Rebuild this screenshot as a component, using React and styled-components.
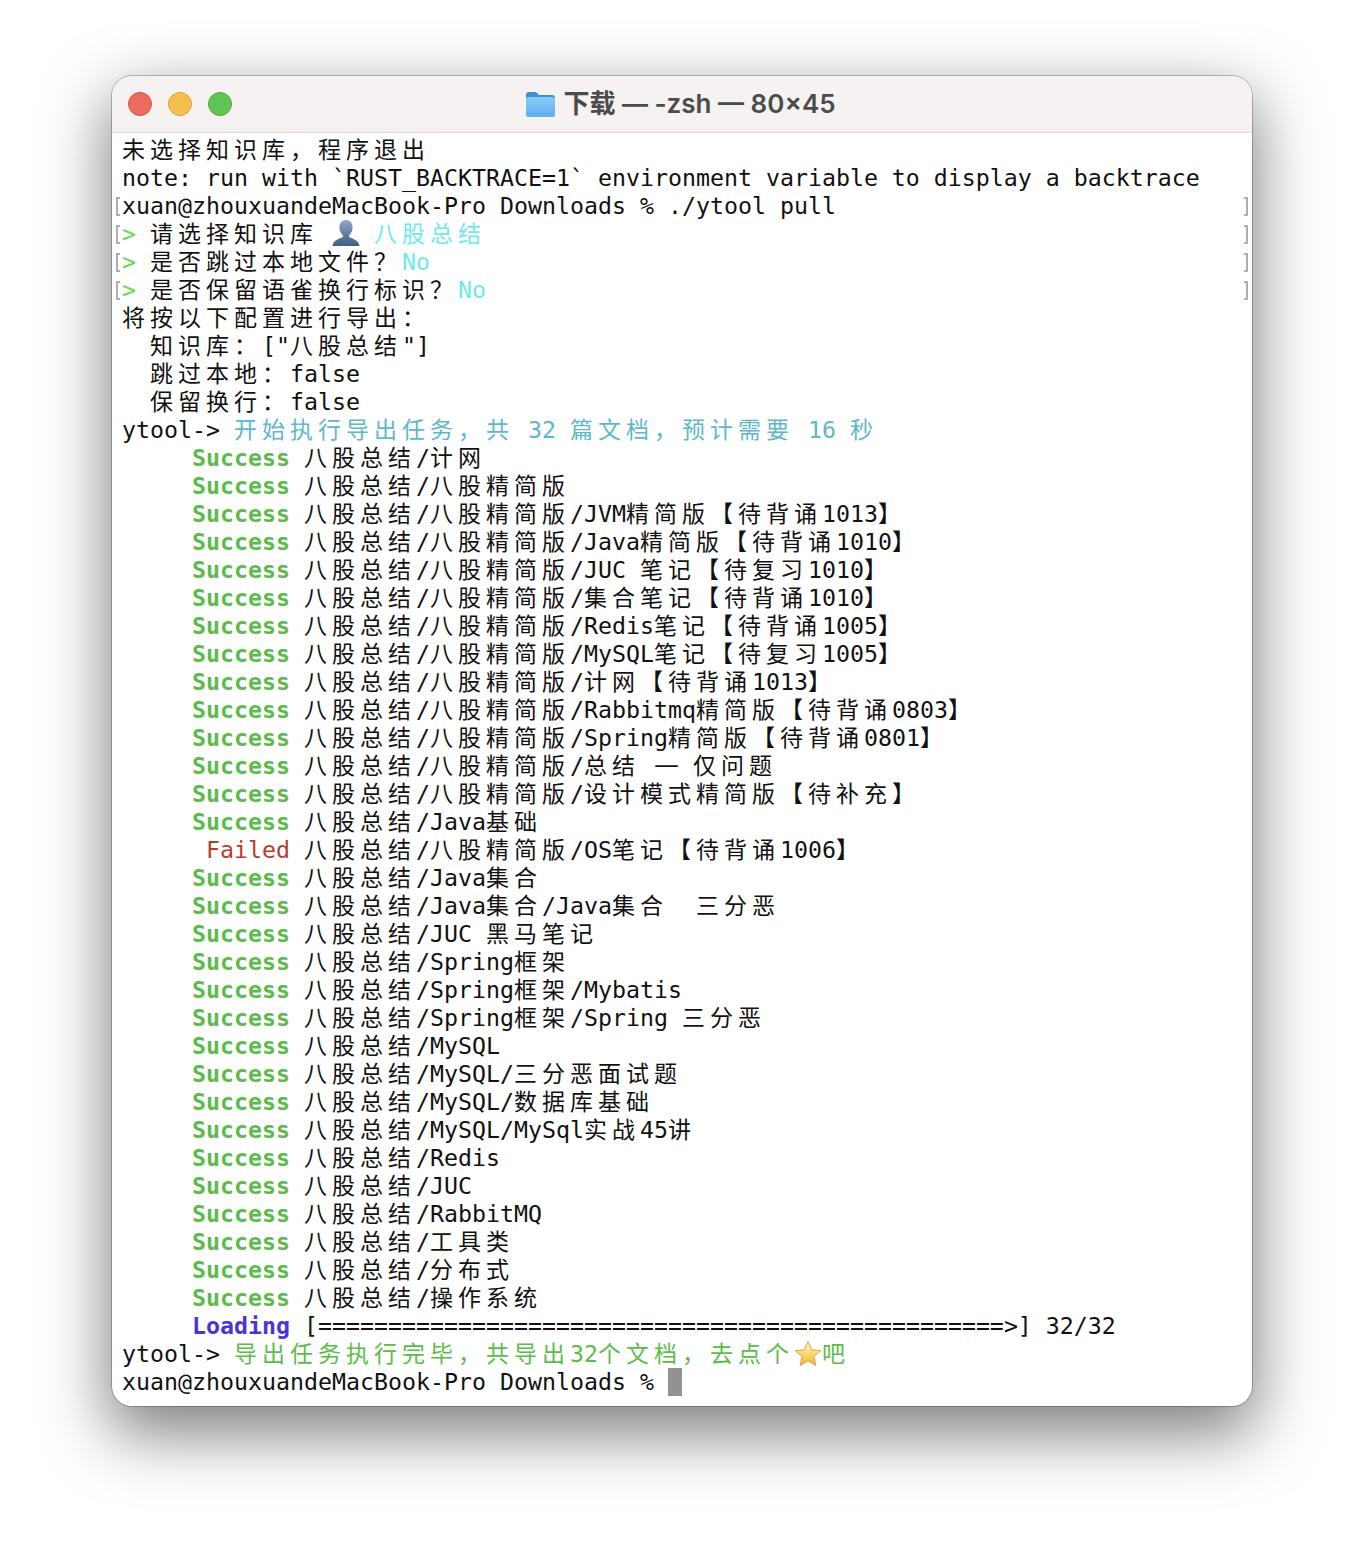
import React from 'react';
import styled, { createGlobalStyle } from 'styled-components';

const GlobalStyle = createGlobalStyle`
  html, body {
    margin: 0;
    padding: 0;
    background: #fff;
  }
`;

const Page = styled.div`
  width: 1364px;
  height: 1554px;
  padding: 76px 112px 0;
  box-sizing: border-box;
  overflow: hidden;
`;

const Window = styled.div`
  width: 1140px;
  height: 1330px;
  border-radius: 20px;
  background: #fff;
  overflow: hidden;
  box-shadow: 0 0 0 1px rgba(0, 0, 0, 0.24), 0 24px 64px 4px rgba(0, 0, 0, 0.5);
`;

const TitleBar = styled.div`
  position: relative;
  height: 57px;
  box-sizing: border-box;
  display: flex;
  align-items: center;
  justify-content: center;
  background: #f5f2f1;
  border-bottom: 1px solid #dcdad9;
`;

const Lights = styled.div`
  position: absolute;
  left: 16px;
  top: 16px;
  display: flex;
  gap: 16px;
`;

const Light = styled.span`
  width: 24px;
  height: 24px;
  box-sizing: border-box;
  border-radius: 50%;
  background: ${p => p.$fill};
  border: 1px solid ${p => p.$edge};
`;

const Title = styled.div`
  display: flex;
  align-items: center;
  gap: 7px;
  margin-left: -3px;
  font-family: Inter, "Noto Sans CJK SC", sans-serif;
  font-size: 26px;
  font-weight: 600;
  color: #4c4b4b;
  white-space: pre;
`;

const TitleText = styled.span`
  margin-bottom: 6px;
`;

const Terminal = styled.div`
  padding-top: 3px;
`;

const Row = styled.div`
  height: 28px;
  display: flex;
  padding: 0 2px;
  font-family: "DejaVu Sans Mono", monospace;
  font-size: 23.25px;
  line-height: 28px;
  color: #111;
  white-space: pre;
`;

const Gutter = styled.span`
  flex: 0 0 8px;
  display: flex;
  align-items: center;
  justify-content: ${p => (p.$right ? 'flex-end' : 'flex-start')};
`;

const Bracket = styled.span`
  box-sizing: border-box;
  width: 4px;
  height: 19px;
  margin: ${p => (p.$right ? '0 2px 0 0' : '0 0 0 2px')};
  border: solid #aeaeae;
  border-width: 2px;
  border-${p => (p.$right ? 'left' : 'right')}-width: 0;
`;

const Line = styled.span`
  flex: 1;
`;

const Cjk = styled.span`
  font-family: "Noto Sans CJK SC", sans-serif;
  font-size: 23px;
  letter-spacing: 5px;
  line-height: 0;
`;

const Dash = styled.span`
  font-family: "Noto Sans CJK SC", sans-serif;
  font-size: 28px;
  line-height: 0;
`;

const tones = {
  cyan: '#6fe9ec',
  prompt: '#62dc4c',
  teal: '#5db8ca',
  green: '#5cbc4b',
  red: '#b83c2c',
  blue: '#4a34d6',
};

const Tone = styled.span`
  color: ${p => tones[p.$tone]};
  font-weight: ${p => (p.$bold ? 700 : 400)};
`;

const Cell = styled.span`
  display: inline-block;
  width: 28px;
  height: 28px;
  vertical-align: top;
`;

const Cursor = styled.span`
  display: inline-block;
  width: 14px;
  height: 28px;
  vertical-align: top;
  background: #929292;
`;

const CJK_RUN = /(—|[\u2E80-\u9FFF\uFF00-\uFFEF]+)/;

function T({ children }) {
  return children.split(CJK_RUN).map((part, i) => {
    if (i % 2 === 0) return part;
    return part === '—' ? <Dash key={i}>{part}</Dash> : <Cjk key={i}>{part}</Cjk>;
  });
}

function FolderIcon() {
  return (
    <svg width="31" height="28" viewBox="0 0 31 28">
      <defs>
        <linearGradient id="folderBody" x1="0" y1="0" x2="0" y2="1">
          <stop offset="0" stopColor="#86cbf8" />
          <stop offset="1" stopColor="#62b0ec" />
        </linearGradient>
      </defs>
      <path d="M1 5a3 3 0 0 1 3-3h7l3 3h13a3 3 0 0 1 3 3v4H1z" fill="#3f8fd4" />
      <rect x="1" y="7" width="29" height="20" rx="2.5" fill="url(#folderBody)" />
      <path d="M1.5 23.5h28" stroke="#4f9fdc" strokeWidth="0.8" opacity="0.7" />
    </svg>
  );
}

function PersonIcon() {
  return (
    <Cell>
      <svg width="28" height="28" viewBox="0 0 28 28">
        <defs>
          <linearGradient id="personFill" x1="0" y1="0" x2="0" y2="1">
            <stop offset="0" stopColor="#8ea6c2" />
            <stop offset="1" stopColor="#3f5f86" />
          </linearGradient>
        </defs>
        <path
          d="M14 0c4.200 0 6.600 3.200 6.600 7.300 0 3.200-1.400 6-3.200 7.600-.5.5-.4 1.900.3 2.400 2.400 1.400 9.300 2.800 9.800 8.700H.5c.5-5.900 7.400-7.300 9.800-8.700.7-.5.8-1.900.3-2.400-1.800-1.600-3.200-4.400-3.200-7.600C7.400 3.200 9.800 0 14 0z"
          fill="url(#personFill)"
        />
      </svg>
    </Cell>
  );
}

function StarIcon() {
  return (
    <Cell>
      <svg width="28" height="28" viewBox="0 0 28 28">
        <defs>
          <linearGradient id="starFill" x1="0" y1="0" x2="0" y2="1">
            <stop offset="0" stopColor="#fff6c4" />
            <stop offset="0.55" stopColor="#fbd868" />
            <stop offset="1" stopColor="#f2a93a" />
          </linearGradient>
        </defs>
        <path
          d="M14 1.500l3.700 8.300 9 .9-6.800 6 2 8.800-7.900-4.600-7.900 4.600 2-8.800-6.800-6 9-.9z"
          fill="url(#starFill)"
          stroke="#e2a24a"
          strokeWidth="1"
          strokeLinejoin="round"
        />
      </svg>
    </Cell>
  );
}

const successPaths = [
  '八股总结/计网',
  '八股总结/八股精简版',
  '八股总结/八股精简版/JVM精简版【待背诵1013】',
  '八股总结/八股精简版/Java精简版【待背诵1010】',
  '八股总结/八股精简版/JUC 笔记【待复习1010】',
  '八股总结/八股精简版/集合笔记【待背诵1010】',
  '八股总结/八股精简版/Redis笔记【待背诵1005】',
  '八股总结/八股精简版/MySQL笔记【待复习1005】',
  '八股总结/八股精简版/计网【待背诵1013】',
  '八股总结/八股精简版/Rabbitmq精简版【待背诵0803】',
  '八股总结/八股精简版/Spring精简版【待背诵0801】',
  '八股总结/八股精简版/总结 — 仅问题',
  '八股总结/八股精简版/设计模式精简版【待补充】',
  '八股总结/Java基础',
  { failed: '八股总结/八股精简版/OS笔记【待背诵1006】' },
  '八股总结/Java集合',
  '八股总结/Java集合/Java集合  三分恶',
  '八股总结/JUC 黑马笔记',
  '八股总结/Spring框架',
  '八股总结/Spring框架/Mybatis',
  '八股总结/Spring框架/Spring 三分恶',
  '八股总结/MySQL',
  '八股总结/MySQL/三分恶面试题',
  '八股总结/MySQL/数据库基础',
  '八股总结/MySQL/MySql实战45讲',
  '八股总结/Redis',
  '八股总结/JUC',
  '八股总结/RabbitMQ',
  '八股总结/工具类',
  '八股总结/分布式',
  '八股总结/操作系统',
];

function TermRow({ marked, children }) {
  return (
    <Row>
      <Gutter>{marked && <Bracket />}</Gutter>
      <Line>{children}</Line>
      <Gutter $right>{marked && <Bracket $right />}</Gutter>
    </Row>
  );
}

function Prompt() {
  return <Tone $tone="prompt">{'> '}</Tone>;
}

export default function App() {
  return (
    <Page>
      <GlobalStyle />
      <Window>
        <TitleBar>
          <Lights>
            <Light $fill="#ed6a5e" $edge="#d55245" />
            <Light $fill="#f5bf4f" $edge="#d9a23c" />
            <Light $fill="#61c554" $edge="#4fa941" />
          </Lights>
          <Title>
            <FolderIcon />
            <TitleText>下载 — -zsh — 80×45</TitleText>
          </Title>
        </TitleBar>
        <Terminal>
          <TermRow><T>未选择知识库，程序退出</T></TermRow>
          <TermRow>note: run with `RUST_BACKTRACE=1` environment variable to display a backtrace</TermRow>
          <TermRow marked>xuan@zhouxuandeMacBook-Pro Downloads % ./ytool pull</TermRow>
          <TermRow marked>
            <Prompt /><T>请选择知识库</T> <PersonIcon /> <Tone $tone="cyan"><T>八股总结</T></Tone>
          </TermRow>
          <TermRow marked>
            <Prompt /><T>是否跳过本地文件？</T><Tone $tone="cyan">No</Tone>
          </TermRow>
          <TermRow marked>
            <Prompt /><T>是否保留语雀换行标识？</T><Tone $tone="cyan">No</Tone>
          </TermRow>
          <TermRow><T>将按以下配置进行导出：</T></TermRow>
          <TermRow>  <T>知识库：</T>["<T>八股总结</T>"]</TermRow>
          <TermRow>  <T>跳过本地：</T>false</TermRow>
          <TermRow>  <T>保留换行：</T>false</TermRow>
          <TermRow>
            ytool-&gt; <Tone $tone="teal"><T>开始执行导出任务，共 32 篇文档，预计需要 16 秒</T></Tone>
          </TermRow>
          {successPaths.map((path, i) =>
            path.failed ? (
              <TermRow key={i}>
                {'      '}<Tone $tone="red">Failed</Tone> <T>{path.failed}</T>
              </TermRow>
            ) : (
              <TermRow key={i}>
                {'     '}<Tone $tone="green" $bold>Success</Tone> <T>{path}</T>
              </TermRow>
            )
          )}
          <TermRow>
            {'     '}<Tone $tone="blue" $bold>Loading</Tone> [{'='.repeat(49)}&gt;] 32/32
          </TermRow>
          <TermRow>
            ytool-&gt; <Tone $tone="green"><T>导出任务执行完毕，共导出</T>32<T>个文档，去点个</T><StarIcon /><T>吧</T></Tone>
          </TermRow>
          <TermRow>xuan@zhouxuandeMacBook-Pro Downloads % <Cursor /></TermRow>
        </Terminal>
      </Window>
    </Page>
  );
}
